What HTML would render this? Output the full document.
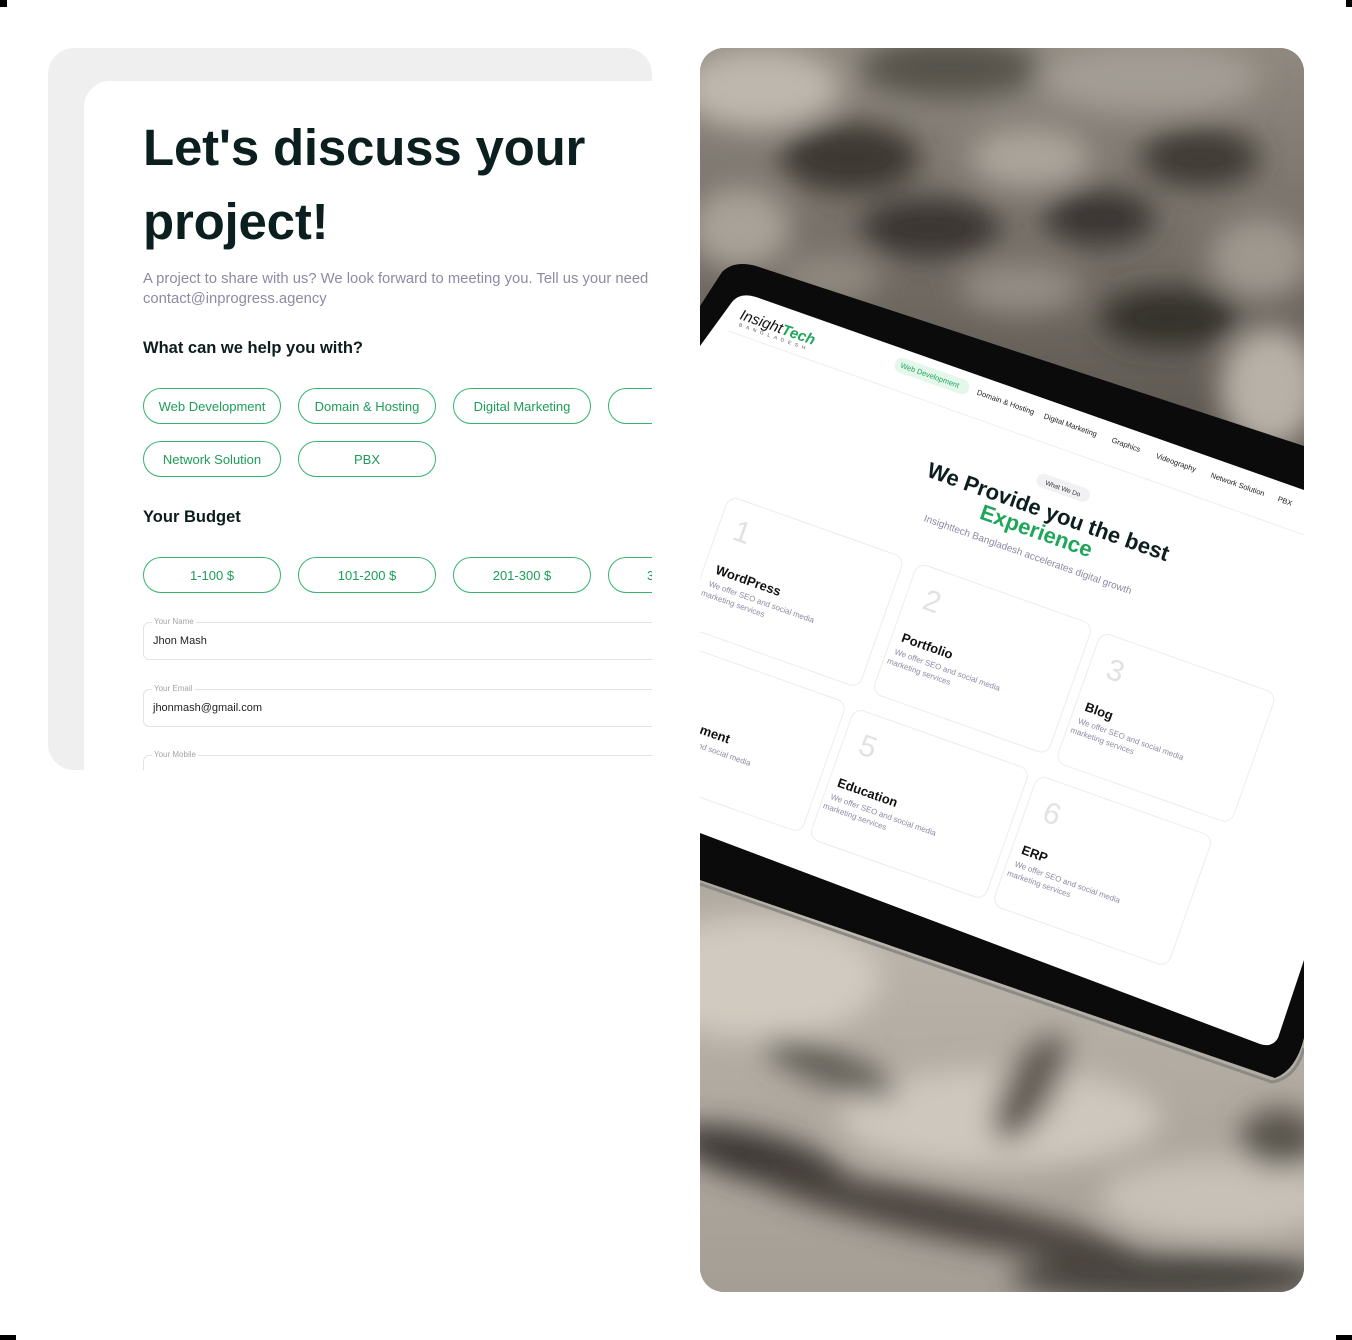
<!DOCTYPE html>
<html><head><meta charset="utf-8"><style>
*{margin:0;padding:0;box-sizing:border-box}
body{width:1352px;height:1340px;background:#fff;position:relative;overflow:hidden;font-family:"Liberation Sans",sans-serif}
.mk{position:absolute;background:#000}
.lc{position:absolute;left:48px;top:48px;width:604px;height:722px;background:#efefef;border-radius:26px 26px 0 26px;overflow:hidden}
.ic{position:absolute;left:36px;top:33px;width:600px;height:700px;background:#fff;border-radius:26px 0 0 0}
h1{position:absolute;left:59px;top:30px;font-size:51px;line-height:74px;font-weight:700;color:#0c1f1f;letter-spacing:-0.2px;white-space:nowrap}
.p{position:absolute;left:59px;top:189px;font-size:14.8px;line-height:19.5px;color:#8d8aa3;white-space:nowrap}
.h{position:absolute;left:59px;font-size:16.5px;font-weight:700;color:#0d1c1c;white-space:nowrap}
.pill{position:absolute;width:138px;height:36px;border:1.3px solid #36b46e;border-radius:18px;color:#1d9d58;font-size:13px;display:flex;align-items:center;justify-content:center;white-space:nowrap}
.f{position:absolute;left:59px;width:560px;height:38px;border:1px solid #e3e3e3;border-radius:6px}
.f span{position:absolute;left:8px;top:-6px;background:#fff;padding:0 2px;font-size:8px;color:#a5a5a5}
.f b{position:absolute;left:9px;top:12px;font-weight:400;font-size:11px;color:#222}
.rp{position:absolute;left:700px;top:48px;width:604px;height:1244px;border-radius:24px;overflow:hidden;background:#8b857d}
</style></head><body>
<div class="mk" style="left:0;top:0;width:7px;height:7px"></div>
<div class="mk" style="left:1346px;top:0;width:6px;height:7px"></div>
<div class="mk" style="left:0;top:1335px;width:16px;height:5px"></div>
<div class="mk" style="left:1336px;top:1335px;width:16px;height:5px"></div>

<div class="lc"><div class="ic">
<h1>Let's discuss your<br>project!</h1>
<div class="p">A project to share with us? We look forward to meeting you. Tell us your need<br>contact@inprogress.agency</div>
<div class="h" style="top:258px">What can we help you with?</div>
<div class="pill" style="left:59px;top:307px">Web Development</div>
<div class="pill" style="left:214px;top:307px">Domain &amp; Hosting</div>
<div class="pill" style="left:369px;top:307px">Digital Marketing</div>
<div class="pill" style="left:524px;top:307px"></div>
<div class="pill" style="left:59px;top:360px">Network Solution</div>
<div class="pill" style="left:214px;top:360px">PBX</div>
<div class="h" style="top:427px">Your Budget</div>
<div class="pill" style="left:59px;top:476px">1-100 $</div>
<div class="pill" style="left:214px;top:476px">101-200 $</div>
<div class="pill" style="left:369px;top:476px">201-300 $</div>
<div class="pill" style="left:524px;top:476px;justify-content:flex-start;padding-left:38px">3</div>
<div class="f" style="top:541px"><span>Your Name</span><b>Jhon Mash</b></div>
<div class="f" style="top:608px"><span>Your Email</span><b>jhonmash@gmail.com</b></div>
<div class="f" style="top:674px"><span>Your Mobile</span></div>
</div></div>

<div class="rp">
<svg width="604" height="1244" viewBox="0 0 604 1244" xmlns="http://www.w3.org/2000/svg" font-family="Liberation Sans, sans-serif">
<defs>
<filter id="b1" x="-50%" y="-50%" width="200%" height="200%"><feGaussianBlur stdDeviation="14"/></filter>
<linearGradient id="bg" x1="0" y1="0" x2="0" y2="1">
<stop offset="0" stop-color="#8f8980"/><stop offset="0.3" stop-color="#5e5852"/><stop offset="0.72" stop-color="#b9b3a9"/><stop offset="1" stop-color="#a49e95"/></linearGradient>
</defs>
<rect width="604" height="1244" fill="url(#bg)"/>
<g filter="url(#b1)">
<ellipse cx="60" cy="40" rx="80" ry="40" fill="#bdb7ad"/>
<ellipse cx="250" cy="20" rx="90" ry="30" fill="#57524b"/>
<ellipse cx="450" cy="30" rx="110" ry="35" fill="#a39d94"/>
<ellipse cx="150" cy="110" rx="70" ry="35" fill="#3c3732"/>
<ellipse cx="330" cy="110" rx="60" ry="30" fill="#aaa49b"/>
<ellipse cx="500" cy="110" rx="60" ry="30" fill="#403b36"/>
<ellipse cx="40" cy="180" rx="50" ry="40" fill="#a8a298"/>
<ellipse cx="230" cy="180" rx="70" ry="30" fill="#3a3530"/>
<ellipse cx="400" cy="170" rx="55" ry="28" fill="#3a3530"/>
<ellipse cx="560" cy="210" rx="50" ry="40" fill="#9e988f"/>
<ellipse cx="130" cy="230" rx="50" ry="25" fill="#8e887f"/>
<ellipse cx="320" cy="240" rx="60" ry="25" fill="#938d84"/>
<ellipse cx="470" cy="270" rx="70" ry="30" fill="#35302b"/>
<ellipse cx="570" cy="340" rx="50" ry="60" fill="#b7b1a7"/>
<ellipse cx="60" cy="930" rx="120" ry="60" fill="#d0cac0"/>
<ellipse cx="300" cy="1070" rx="160" ry="50" fill="#cdc7bd"/>
<ellipse cx="520" cy="1150" rx="120" ry="40" fill="#c7c1b7"/>
<ellipse cx="60" cy="1110" rx="90" ry="25" fill="#3e3934" transform="rotate(15 60 1110)"/>
<ellipse cx="250" cy="1170" rx="200" ry="22" fill="#48433d" transform="rotate(12 250 1170)"/>
<ellipse cx="470" cy="1230" rx="160" ry="25" fill="#4a453f"/>
<ellipse cx="330" cy="1040" rx="25" ry="60" fill="#625c55" transform="rotate(30 330 1040)"/>
<ellipse cx="580" cy="1090" rx="40" ry="30" fill="#5a544d"/>
<ellipse cx="130" cy="1020" rx="70" ry="18" fill="#615b54" transform="rotate(20 130 1020)"/>
</g>
<!-- bezel -->
<path d="M0,258 L22,224 Q34,212 56,218 L604,398 L604,990 Q596,1022 575,1030 L0,832 Z" fill="#0b0b0b"/>
<path d="M0,836 L572,1034 Q596,1030 604,1000" stroke="#8c8a86" stroke-width="3" fill="none"/>
<!-- screen -->
<path d="M0,298 L32,254 Q40,244 56,249 L604,442 L604,912 L578,990 Q572,1000 560,996 L0,785 Z" fill="#fff"/>
<clipPath id="sc"><path d="M0,298 L32,254 Q40,244 56,249 L604,442 L604,912 L578,990 Q572,1000 560,996 L0,785 Z"/></clipPath>
<g clip-path="url(#sc)">
<g transform="translate(40,250) rotate(19.5)">
<text x="6" y="20" font-size="15" fill="#111" font-style="italic">Insight<tspan fill="#1fa65a" font-weight="700">Tech</tspan></text>
<text x="8" y="27" font-size="5" fill="#555" letter-spacing="4">BANGLADESH</text>
<rect x="168" y="2" width="78" height="15" rx="7" fill="#e3f7ea"/>
<text x="174" y="12" font-size="7.5" fill="#1fa65a">Web Development</text>
<g font-size="7.5" fill="#222">
<text x="255" y="12">Domain &amp; Hosting</text>
<text x="326" y="12">Digital Marketing</text>
<text x="398" y="12">Graphics</text>
<text x="445" y="12">Videography</text>
<text x="503" y="12">Network Solution</text>
<text x="574" y="12">PBX</text>
</g>
<line x1="0" y1="35" x2="620" y2="35" stroke="#eee"/>
<rect x="340" y="64" width="56" height="14" rx="7" fill="#f1f1f3"/>
<text x="368" y="74" font-size="6.5" fill="#333" text-anchor="middle">What We Do</text>
<text x="362" y="106" font-size="22" font-weight="700" fill="#0e1e1e" text-anchor="middle">We Provide you the best</text>
<text x="357" y="128" font-size="22" font-weight="700" fill="#1fa65a" text-anchor="middle">Experience</text>
<text x="357" y="149" font-size="10" fill="#8d8aa3" text-anchor="middle">Insighttech Bangladesh accelerates digital growth</text>
<g fill="none" stroke="#ececee">
<rect x="56" y="190" width="186" height="138" rx="10"/>
<rect x="256" y="190" width="186" height="138" rx="10"/>
<rect x="452" y="194" width="186" height="138" rx="10"/>
<rect x="50" y="346" width="186" height="138" rx="10"/>
<rect x="245" y="348" width="186" height="138" rx="10"/>
<rect x="440" y="350" width="186" height="138" rx="10"/>
</g>
<g font-size="30" fill="#e2e2e6">
<text x="72" y="230">1</text><text x="274" y="232">2</text><text x="470" y="236">3</text>
<text x="262" y="390">5</text><text x="458" y="392">6</text></g>
<g font-size="13" font-weight="700" fill="#111">
<text x="68" y="268">WordPress</text><text x="266" y="270">Portfolio</text><text x="462" y="274">Blog</text>
<text x="56" y="424">Development</text><text x="254" y="428">Education</text><text x="450" y="430">ERP</text></g>
<g font-size="8" fill="#8d8aa3">
<text x="66" y="282">We offer SEO and social media</text><text x="62" y="293">marketing services</text>
<text x="264" y="284">We offer SEO and social media</text><text x="260" y="295">marketing services</text>
<text x="460" y="288">We offer SEO and social media</text><text x="456" y="299">marketing services</text>
<text x="54" y="438">We offer SEO and social media</text>
<text x="252" y="442">We offer SEO and social media</text><text x="248" y="453">marketing services</text>
<text x="448" y="444">We offer SEO and social media</text><text x="444" y="455">marketing services</text></g>
</g></g>
</svg>
</div>
</body></html>
